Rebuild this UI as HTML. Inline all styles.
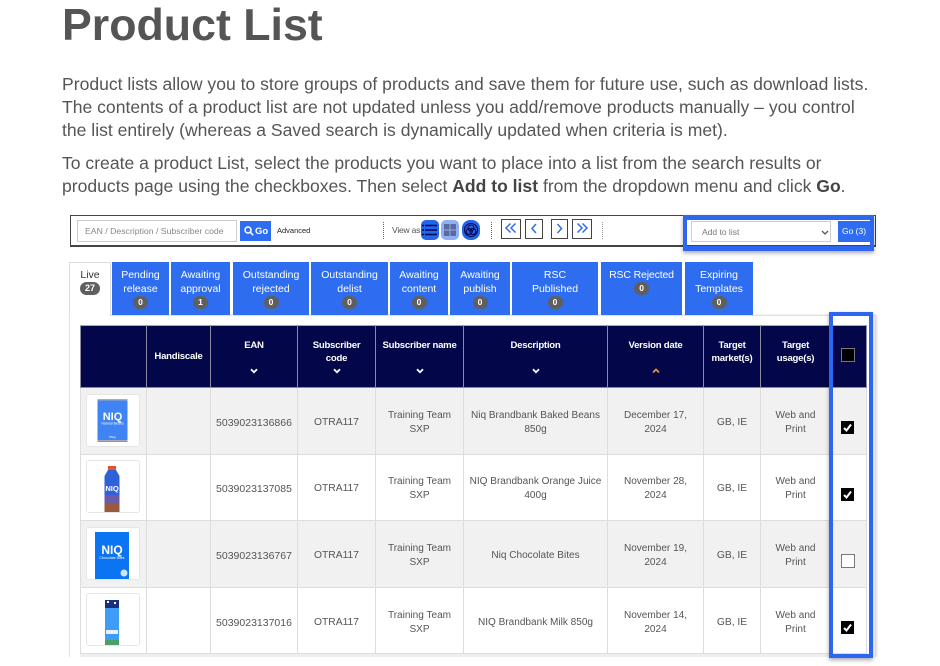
<!DOCTYPE html>
<html><head><meta charset="utf-8">
<style>
html,body{margin:0;padding:0;background:#fff;overflow:hidden;height:666px}
body{width:940px;position:relative;font-family:"Liberation Sans",sans-serif;color:#555}
.a{position:absolute}
h1{position:absolute;left:62px;top:0;margin:0;font-size:44.7px;line-height:52px;font-weight:bold;color:#555;white-space:nowrap}
.p{position:absolute;left:62px;font-size:17.57px;line-height:23px;color:#555;white-space:nowrap}
.p b{color:#444}
.ui{position:absolute;left:0;top:0;width:940px;height:666px;overflow:hidden;filter:blur(.3px)}
.tb{left:70px;top:215px;width:804px;height:29px;border:1px solid #444;border-bottom-width:2px;background:#fff}
.inp{left:77px;top:220px;width:158px;height:20px;border:1px solid #ccc;font-size:8.7px;line-height:20px;color:#888;text-indent:7px;white-space:nowrap}
.go{left:240px;top:221px;width:31px;height:20px;background:#2f6df0;color:#fff;font-size:9.5px;font-weight:bold;line-height:21px}
.dots{width:0;border-left:1px dotted #666;top:222px;height:17px}
.ic{top:220px;width:18px;height:20px;border-radius:5px;background:#2166ec}
.pg{top:219px;height:18px;border:1px solid #444;background:#fff}
.tab{position:absolute;top:262px;height:53px;background:#2f6df0;color:#fff;font-size:10.5px;line-height:14px;text-align:center;padding-top:6px;box-sizing:border-box}
.tab span,.bd{display:block;margin:0 auto;width:15px;height:13px;border-radius:7px;background:#5f5f5f;color:#fff;font-size:8.5px;font-weight:bold;line-height:13px}
.panel{left:69px;top:315px;width:807px;height:342px;background:#fff;border:1px solid #e4e4e4;border-top-color:#e0e0e0;border-bottom:0;box-sizing:border-box;box-shadow:1px 0 2px #ddd}
table{position:absolute;left:80px;top:325px;border-collapse:collapse;table-layout:fixed;width:786px;font-size:10.5px;color:#555}
th{box-sizing:border-box;background:#03074a;color:#fff;height:62px;border:1px solid #8a8aa0;border-top:1px solid #aaa;font-size:9.6px;line-height:13px;vertical-align:top;padding:13px 0 0;position:relative;font-weight:bold;letter-spacing:-.25px}
th svg{position:absolute;left:50%;margin-left:-4px;top:42px}
td{box-sizing:border-box;border:1px solid #ddd;text-align:center;line-height:14px;height:66.6px;padding:4px 0 0;vertical-align:middle}
td.d{font-size:10.05px}
td.c{font-size:10.3px}
tr.o td{background:#f1f1f1}
.th{left:86px;width:54px;height:53px;border:1px solid #e6e6e6;border-radius:3px;background:#fff;box-sizing:border-box;overflow:hidden}
.cb{left:841px;width:13px;height:13px;background:#000;box-sizing:border-box}
.hl{border:4px solid #2d67f0;box-sizing:border-box;box-shadow:0 2px 4px rgba(0,0,40,.35)}
</style></head><body>
<h1>Product List</h1>
<div class="p" style="top:73px">Product lists allow you to store groups of products and save them for future use, such as download lists.<br>The contents of a product list are not updated unless you add/remove products manually – you control<br>the list entirely (whereas a Saved search is dynamically updated when criteria is met).</div>
<div class="p" style="top:152px">To create a product List, select the products you want to place into a list from the search results or<br>products page using the checkboxes. Then select <b>Add to list</b> from the dropdown menu and click <b>Go</b>.</div>

<div class="ui">
<div class="a tb"></div>
<div class="a inp">EAN / Description / Subscriber code</div>
<div class="a go"><svg class="a" style="left:4px;top:5px" width="10" height="10" viewBox="0 0 10 10" fill="none" stroke="#fff" stroke-width="1.5"><circle cx="4" cy="4" r="3"/><path d="M6.2 6.2L9.2 9.2"/></svg><span class="a" style="left:15px;top:0">Go</span></div>
<div class="a" style="left:277px;top:226px;font-size:7.5px;line-height:10px;color:#222">Advanced</div>
<div class="a dots" style="left:383px"></div>
<div class="a" style="left:392px;top:225px;font-size:8.5px;line-height:11px;color:#555;letter-spacing:-.2px">View as</div>
<div class="a ic" style="left:421px"><svg width="18" height="20" viewBox="0 0 18 20" fill="none" stroke="#03074a" stroke-width="1.6"><path d="M4 5.5H16M4 10H16M4 14.5H16"/><path d="M1 5.5H3M1 10H3M1 14.5H3"/></svg></div>
<div class="a ic" style="left:441px;background:#8faef5"><svg width="18" height="20" viewBox="0 0 18 20" fill="#5a6a9c"><rect x="3" y="4" width="5.5" height="5.5"/><rect x="9.5" y="4" width="5.5" height="5.5"/><rect x="3" y="10.5" width="5.5" height="5.5"/><rect x="9.5" y="10.5" width="5.5" height="5.5"/></svg></div>
<div class="a ic" style="left:462px;border-radius:8px"><svg width="18" height="20" viewBox="0 0 18 20" fill="none" stroke="#03074a" stroke-width="1.1"><circle cx="9" cy="10" r="6.5"/><circle cx="9" cy="8" r="3"/><circle cx="7.200" cy="11.500" r="3"/><circle cx="10.800" cy="11.500" r="3"/></svg></div>
<div class="a dots" style="left:491px"></div>
<div class="a pg" style="left:501px;width:18px"><svg width="18" height="18" viewBox="0 0 18 18" fill="none" stroke="#2f6df0" stroke-width="1.5"><path d="M8.5 3.5L4 8L8.5 12.5M13.5 3.5L9 8L13.5 12.5"/></svg></div>
<div class="a pg" style="left:525px;width:16px"><svg width="16" height="18" viewBox="0 0 16 18" fill="none" stroke="#2f6df0" stroke-width="1.5"><path d="M10 4L6 8.5L10 13"/></svg></div>
<div class="a pg" style="left:551px;width:15px"><svg width="15" height="18" viewBox="0 0 15 18" fill="none" stroke="#2f6df0" stroke-width="1.5"><path d="M5.5 4L9.5 8.5L5.5 13"/></svg></div>
<div class="a pg" style="left:572px;width:18px"><svg width="18" height="18" viewBox="0 0 18 18" fill="none" stroke="#2f6df0" stroke-width="1.5"><path d="M4.5 3.5L9 8L4.5 12.5M9.5 3.5L14 8L9.5 12.5"/></svg></div>
<div class="a dots" style="left:602px;border-left-color:#999"></div>

<div class="a panel"></div>
<div class="a" style="left:69px;top:262px;width:42px;height:54px;background:#fff;border:1px solid #ddd;border-bottom:0;box-sizing:border-box;font-size:10.5px;line-height:14px;text-align:center;padding-top:5px;color:#333">Live<div class="bd" style="width:20px;font-size:9px">27</div></div>
<div class="tab" style="left:112px;width:57px">Pending<br>release<span>0</span></div>
<div class="tab" style="left:171px;width:59px">Awaiting<br>approval<span>1</span></div>
<div class="tab" style="left:233px;width:76px">Outstanding<br>rejected<span>0</span></div>
<div class="tab" style="left:311px;width:77px">Outstanding<br>delist<span>0</span></div>
<div class="tab" style="left:390px;width:58px">Awaiting<br>content<span>0</span></div>
<div class="tab" style="left:450px;width:60px">Awaiting<br>publish<span>0</span></div>
<div class="tab" style="left:512px;width:86px">RSC<br>Published<span>0</span></div>
<div class="tab" style="left:601px;width:81px;letter-spacing:-.15px">RSC Rejected<span>0</span></div>
<div class="tab" style="left:685px;width:68px">Expiring<br>Templates<span>0</span></div>

<table>
<colgroup><col style="width:66px"><col style="width:64px"><col style="width:87px"><col style="width:78px"><col style="width:88px"><col style="width:144px"><col style="width:96px"><col style="width:57px"><col style="width:70px"><col style="width:36px"></colgroup>
<tr>
<th></th>
<th style="padding-top:24px">Handiscale</th>
<th>EAN<svg width="8" height="6" viewBox="0 0 8 6" fill="none" stroke="#fff" stroke-width="1.8"><path d="M1 1.2L4 4.2L7 1.2"/></svg></th>
<th>Subscriber<br>code<svg width="8" height="6" viewBox="0 0 8 6" fill="none" stroke="#fff" stroke-width="1.8"><path d="M1 1.2L4 4.2L7 1.2"/></svg></th>
<th>Subscriber name<svg width="8" height="6" viewBox="0 0 8 6" fill="none" stroke="#fff" stroke-width="1.8"><path d="M1 1.2L4 4.2L7 1.2"/></svg></th>
<th>Description<svg width="8" height="6" viewBox="0 0 8 6" fill="none" stroke="#fff" stroke-width="1.8"><path d="M1 1.2L4 4.2L7 1.2"/></svg></th>
<th>Version date<svg width="8" height="6" viewBox="0 0 8 6" fill="none" stroke="#f08a3c" stroke-width="1.8"><path d="M1 4.5L4 1.5L7 4.5"/></svg></th>
<th>Target<br>market(s)</th>
<th>Target<br>usage(s)</th>
<th></th>
</tr>
<tr class="o"><td></td><td></td><td>5039023136866</td><td class="c">OTRA117</td><td class="d">Training Team<br>SXP</td><td class="d">Niq Brandbank Baked Beans<br>850g</td><td class="d">December 17,<br>2024</td><td class="c">GB, IE</td><td class="d">Web and<br>Print</td><td></td></tr>
<tr><td></td><td></td><td>5039023137085</td><td class="c">OTRA117</td><td class="d">Training Team<br>SXP</td><td class="d">NIQ Brandbank Orange Juice<br>400g</td><td class="d">November 28,<br>2024</td><td class="c">GB, IE</td><td class="d">Web and<br>Print</td><td></td></tr>
<tr class="o"><td></td><td></td><td>5039023136767</td><td class="c">OTRA117</td><td class="d">Training Team<br>SXP</td><td class="d">Niq Chocolate Bites</td><td class="d">November 19,<br>2024</td><td class="c">GB, IE</td><td class="d">Web and<br>Print</td><td></td></tr>
<tr><td></td><td></td><td>5039023137016</td><td class="c">OTRA117</td><td class="d">Training Team<br>SXP</td><td class="d">NIQ Brandbank Milk 850g</td><td class="d">November 14,<br>2024</td><td class="c">GB, IE</td><td class="d">Web and<br>Print</td><td></td></tr>
</table>
<div class="a" style="left:80px;top:654px;width:786px;height:3px;background:#eee"></div>
<div class="a" style="left:0;top:657px;width:940px;height:9px;background:#fff"></div>

<div class="a th" style="top:394px"><svg width="52" height="51" viewBox="0 0 52 51"><rect x="10.500" y="4" width="30" height="47" fill="#3f83f5"/><rect x="10.500" y="4" width="30" height="1.500" fill="#aab"/><rect x="10.500" y="45" width="30" height="1.500" fill="#aab"/><rect x="46" y="0" width="0" height="0"/><text x="25.500" y="25" font-family="Liberation Sans" font-size="11" font-weight="bold" fill="#fff" text-anchor="middle">NIQ</text><text x="25.500" y="29.500" font-family="Liberation Sans" font-size="3.500" fill="#fff" text-anchor="middle">Natural Beans</text><text x="25.500" y="43" font-family="Liberation Sans" font-size="3" fill="#fff" text-anchor="middle">850g</text><rect x="0" y="47" width="52" height="4" fill="#fff"/></svg></div>
<div class="a th" style="top:460px"><svg width="52" height="51" viewBox="0 0 52 51"><rect x="21" y="5" width="8" height="4" fill="#e0562a"/><path d="M21 9H29L32.500 15V51H17.500V15Z" fill="#2f62d8"/><path d="M17.500 34H32.500V42H17.500Z" fill="#6b5aa8"/><path d="M17.500 42H32.500V51H17.500Z" fill="#9a5a3f"/><text x="25" y="30" font-family="Liberation Sans" font-size="7.500" font-weight="bold" fill="#fff" text-anchor="middle">NIQ</text></svg></div>
<div class="a th" style="top:527px"><svg width="52" height="51" viewBox="0 0 52 51"><rect x="8" y="4" width="34" height="47" fill="#0b74f2"/><text x="25" y="26" font-family="Liberation Sans" font-size="12" font-weight="bold" fill="#fff" text-anchor="middle">NIQ</text><text x="25" y="31" font-family="Liberation Sans" font-size="3.600" fill="#fff" text-anchor="middle">Chocolate Bites</text><circle cx="37" cy="45" r="3.500" fill="#cfe3ff"/></svg></div>
<div class="a th" style="top:593px"><svg width="52" height="51" viewBox="0 0 52 51"><rect x="18" y="6" width="14" height="46" fill="#3f9bf5"/><rect x="18" y="6" width="14" height="8" fill="#1a2f80"/><rect x="20" y="7" width="2" height="2" fill="#fff"/><rect x="27" y="8" width="2" height="2" fill="#fff"/><rect x="19" y="36" width="12" height="4" fill="#e6f0ff"/><rect x="18" y="46" width="14" height="6" fill="#4aa06a"/></svg></div>

<div class="a cb" style="top:348px;width:14px;height:14px;border:1.5px solid #777"></div>
<div class="a cb" style="top:421px"><svg width="13" height="13" viewBox="0 0 13 13" fill="none" stroke="#fff" stroke-width="2"><path d="M3 7L5.500 9.500L10 3.500"/></svg></div>
<div class="a cb" style="top:488px"><svg width="13" height="13" viewBox="0 0 13 13" fill="none" stroke="#fff" stroke-width="2"><path d="M3 7L5.500 9.500L10 3.500"/></svg></div>
<div class="a cb" style="top:554px;width:14px;height:14px;background:#fff;border:1.5px solid #777"></div>
<div class="a cb" style="top:621px"><svg width="13" height="13" viewBox="0 0 13 13" fill="none" stroke="#fff" stroke-width="2"><path d="M3 7L5.500 9.500L10 3.500"/></svg></div>

<div class="a" style="left:691px;top:221px;width:140px;height:21px;border:1px solid #ccc;box-sizing:border-box;background:#fff;font-size:8.5px;line-height:20px;color:#777;padding-left:10px">Add to list<svg class="a" style="left:129px;top:8px" width="8" height="6" viewBox="0 0 8 6" fill="none" stroke="#555" stroke-width="1.300"><path d="M1 1L4 4L7 1"/></svg></div>
<div class="a" style="left:838px;top:221px;width:32px;height:21px;background:#2f6df0;color:#fff;font-size:8.5px;line-height:21px;text-align:center">Go (3)</div>
<div class="a hl" style="left:683px;top:215px;width:191px;height:36px;border-width:5px 4px"></div>
<div class="a hl" style="left:829px;top:312px;width:44px;height:346px"></div>
</div>
</body></html>
